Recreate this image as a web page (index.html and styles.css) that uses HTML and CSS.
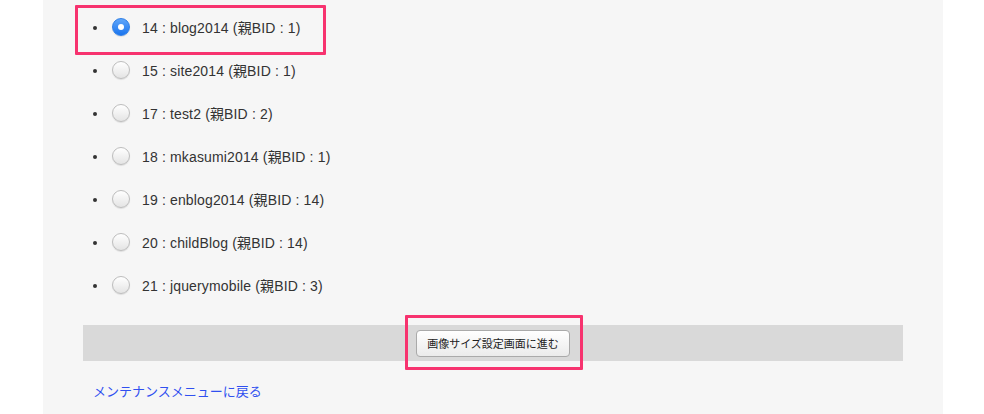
FILE: index.html
```html
<!DOCTYPE html>
<html lang="ja">
<head>
<meta charset="utf-8">
<title>Blog list</title>
<link rel="stylesheet" href="styles.css">
</head>
<body>
<div class="panel">
  <ul class="blogs">
    <li class="blog"><span class="radio on"></span><span class="label">14 : blog2014 (親BID : 1)</span><span class="hl hl-item"></span></li>
    <li class="blog"><span class="radio"></span><span class="label">15 : site2014 (親BID : 1)</span></li>
    <li class="blog"><span class="radio"></span><span class="label">17 : test2 (親BID : 2)</span></li>
    <li class="blog"><span class="radio"></span><span class="label">18 : mkasumi2014 (親BID : 1)</span></li>
    <li class="blog"><span class="radio"></span><span class="label">19 : enblog2014 (親BID : 14)</span></li>
    <li class="blog"><span class="radio"></span><span class="label">20 : childBlog (親BID : 14)</span></li>
    <li class="blog"><span class="radio"></span><span class="label">21 : jquerymobile (親BID : 3)</span></li>
  </ul>
  <div class="bar">
    <button class="btn" type="button">画像サイズ設定画面に進む</button>
    <span class="hl hl-btn"></span>
  </div>
  <a class="back" href="#">メンテナンスメニューに戻る</a>
</div>
</body>
</html>
```
FILE: styles.css
```css
html, body {
  margin: 0;
  padding: 0;
  background: #ffffff;
}
body {
  font-family: "Liberation Sans", "Noto Sans CJK JP", sans-serif;
  color: #333333;
  overflow: hidden;
}
.panel {
  width: 900px;
  margin-left: 43px;
  background: #f6f6f6;
  padding: 5px 40px 0;
  box-sizing: border-box;
  height: 414px;
}
.blogs {
  margin: 0;
  padding: 0;
  list-style: none;
}
.blog {
  position: relative;
  display: flex;
  align-items: center;
  height: 43px;
  font-size: 14px;
}
.blog::before {
  content: "";
  width: 4px;
  height: 4px;
  border-radius: 50%;
  background: #333;
  margin-left: 10px;
  margin-top: 2px;
  flex: none;
}
.radio {
  width: 18px;
  height: 18px;
  border-radius: 50%;
  margin-left: 15px;
  box-sizing: border-box;
  border: 1px solid #bdbdbd;
  background: linear-gradient(#ffffff, #e4e4e4);
  box-shadow: 0 1px 1px rgba(0,0,0,0.10);
  position: relative;
  flex: none;
}
.radio.on {
  border-color: #2f7fe6;
  background: linear-gradient(#5fa6fa, #1a74ee);
}
.radio.on::after {
  content: "";
  position: absolute;
  left: 5px;
  top: 5px;
  width: 6px;
  height: 6px;
  border-radius: 50%;
  background: #fff;
}
.label {
  margin-left: 12px;
  letter-spacing: 0.15px;
  color: #333;
}
.hl {
  position: absolute;
  border: 3px solid #f7336f;
  box-sizing: border-box;
  border-radius: 1px;
}
.hl-item {
  left: -8px;
  top: 0;
  width: 251px;
  height: 50px;
}
.bar {
  position: relative;
  margin-top: 19px;
  height: 36px;
  background: #d9d9d9;
  display: flex;
  align-items: center;
  justify-content: center;
}
.btn {
  width: 154px;
  height: 27px;
  font-family: "Noto Sans CJK JP", sans-serif;
  font-size: 11px;
  color: #222;
  border: 1px solid #aaaaaa;
  border-radius: 4px;
  background: linear-gradient(#ffffff, #ebebeb);
  padding: 0;
}
.hl-btn {
  left: 322px;
  top: -10px;
  width: 178px;
  height: 55px;
}
.back {
  display: inline-block;
  margin-top: 20px;
  margin-left: 10px;
  font-family: "Noto Sans CJK JP", sans-serif;
  font-size: 13px;
  line-height: 20px;
  color: #3050f0;
  text-decoration: none;
}
```
